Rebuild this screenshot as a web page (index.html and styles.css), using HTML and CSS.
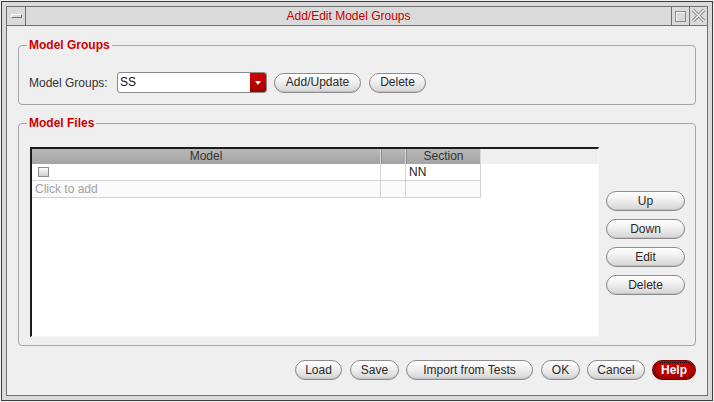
FILE: index.html
```html
<!DOCTYPE html>
<html>
<head>
<meta charset="utf-8">
<link rel="stylesheet" href="styles.css">
</head>
<body>
<div class="window">
  <div class="inner">
    <div class="titlebar">
      <div class="tb-btn tb-menu"><span class="menu-bar"></span></div>
      <div class="title">Add/Edit Model Groups</div>
      <div class="tb-btn tb-right"><span class="max-box"></span></div>
      <div class="tb-btn tb-right">
        <svg width="17" height="18" viewBox="0 0 17 18">
          <path d="M3 3 L14 14 M14 3 L3 14" stroke="#8a8a8a" stroke-width="3.2" fill="none"/>
          <path d="M3 3 L14 14 M14 3 L3 14" stroke="#f6f6f6" stroke-width="1.4" fill="none"/>
        </svg>
      </div>
    </div>
    <div class="content">
      <fieldset class="group group-top">
        <legend>Model Groups</legend>
        <div class="row">
          <span class="label">Model Groups:</span>
          <div class="combo">
            <span class="combo-text">SS</span>
            <span class="combo-arrow"><span class="tri"></span></span>
          </div>
          <button class="btn w-add">Add/Update</button>
          <button class="btn w-del">Delete</button>
        </div>
      </fieldset>
      <fieldset class="group group-files">
        <legend>Model Files</legend>
        <div class="files">
          <div class="table">
            <div class="thead">
              <div class="th">Model</div>
              <div class="th"></div>
              <div class="th">Section</div>
              <div class="th-fill"></div>
            </div>
            <div class="tr">
              <div class="td"><span class="check"></span></div>
              <div class="td"></div>
              <div class="td">NN</div>
            </div>
            <div class="tr tr-alt">
              <div class="td placeholder">Click to add</div>
              <div class="td"></div>
              <div class="td"></div>
            </div>
          </div>
          <div class="side">
            <button class="btn side-btn">Up</button>
            <button class="btn side-btn">Down</button>
            <button class="btn side-btn">Edit</button>
            <button class="btn side-btn">Delete</button>
          </div>
        </div>
      </fieldset>
      <div class="bottom">
        <button class="btn w-load">Load</button>
        <button class="btn w-save">Save</button>
        <button class="btn w-import">Import from Tests</button>
        <button class="btn w-ok">OK</button>
        <button class="btn w-cancel">Cancel</button>
        <button class="btn btn-help">Help</button>
      </div>
    </div>
  </div>
</div>
</body>
</html>
```

FILE: styles.css
```css
* { box-sizing: border-box; }

body {
  margin: 0;
  background: #f0f0f0;
  font: 12px "Liberation Sans", Arial, sans-serif;
  color: #222;
}

.window {
  margin: 1px;
  width: 712px;
  height: 400px;
  border: 1px solid #3c3c3c;
  background: #dadada;
  padding: 4px;
}

.inner {
  height: 100%;
  border: 1px solid #707070;
  background: #efefef;
  display: flex;
  flex-direction: column;
}

.titlebar {
  flex: none;
  height: 19px;
  display: flex;
  background: #dadada;
  border-bottom: 1px solid #707070;
}

.tb-btn {
  flex: none;
  display: flex;
  align-items: center;
  justify-content: center;
}

.tb-menu {
  width: 19px;
  border-right: 1px solid #707070;
}

.menu-bar {
  width: 11px;
  height: 4px;
  border-top: 1px solid #ffffff;
  border-left: 1px solid #ffffff;
  border-right: 1px solid #707070;
  border-bottom: 1px solid #707070;
  background: #dadada;
}

.tb-right {
  width: 18px;
  border-left: 1px solid #707070;
}

.max-box {
  width: 11px;
  height: 11px;
  border: 1px solid #8a8a8a;
  box-shadow: inset 1px 1px 0 #f8f8f8;
}

.title {
  flex: 1;
  text-align: center;
  line-height: 18px;
  color: #c40000;
}

.content {
  flex: 1;
  padding: 12px 11px 0 11px;
}

.group {
  margin: 0;
  border: 1px solid #a6a6a6;
  border-radius: 4px;
  min-width: 0;
}

.group legend {
  padding: 0 2px;
  margin-left: -3px;
  line-height: 14px;
  color: #cc0000;
  font-weight: bold;
}

.group-top {
  padding: 20px 10px 11px 11px;
}

.row {
  display: flex;
  align-items: center;
  height: 21px;
}

.label {
  width: 87px;
  color: #333;
  margin-left: -1px;
}

.combo {
  width: 150px;
  height: 21px;
  display: flex;
  border: 1px solid #8a8a8a;
  border-radius: 3px;
  background: #fff;
  overflow: hidden;
  margin-left: 1px;
  margin-right: 7px;
}

.combo-text {
  flex: 1;
  padding-left: 2px;
  line-height: 19px;
  font-size: 12px;
  color: #111;
}

.combo-arrow {
  width: 16px;
  background: linear-gradient(to bottom, #d40000, #a00000);
  display: flex;
  align-items: center;
  justify-content: center;
}

.tri {
  width: 0;
  height: 0;
  border-left: 3px solid transparent;
  border-right: 3px solid transparent;
  border-top: 4px solid #fff;
}

.btn {
  height: 20px;
  padding: 0;
  border: 1px solid #8c8c8c;
  border-radius: 10px;
  background: linear-gradient(to bottom, #ffffff 0%, #efefef 45%, #d4d4d4 100%);
  box-shadow: inset 0 -1px 0 #c2c2c2;
  font: 12px "Liberation Sans", Arial, sans-serif;
  color: #2a2a2a;
  text-align: center;
  line-height: 17px;
}

.w-add { width: 87px; margin-right: 8px; }
.w-del { width: 57px; }

.group-files {
  margin-top: 11px;
  padding: 17px 9px 8px 11px;
}

.files {
  display: flex;
  gap: 7px;
}

.table {
  flex: none;
  width: 569px;
  height: 190px;
  background: #fff;
  border-top: 2px solid #1c1c1c;
  border-left: 2px solid #1c1c1c;
  border-right: 1px solid #f6f6f6;
  border-bottom: 1px solid #f6f6f6;
}

.thead {
  display: grid;
  grid-template-columns: 349px 25px 75px 1fr;
  height: 15px;
}

.th {
  background: linear-gradient(to bottom, #b8b8b8, #a4a4a4);
  border-right: 1px solid #d8d8d8;
  border-left: 1px solid #8e8e8e;
  text-align: center;
  line-height: 15px;
  color: #333;
}

.th:first-child { border-left: none; }

.th-fill {
  background: #efefef;
}

.tr {
  display: grid;
  grid-template-columns: 349px 25px 75px;
  width: 449px;
  height: 17px;
  background: #fff;
}

.tr-alt { background: #fafafa; }

.td {
  border-right: 1px solid #d2d2d2;
  border-bottom: 1px solid #d2d2d2;
  line-height: 16px;
  padding-left: 3px;
  color: #222;
  display: flex;
  align-items: center;
}

.placeholder { color: #a2a2a2; }

.check {
  width: 11px;
  height: 10px;
  margin-left: 3px;
  border: 1px solid #8c8c8c;
  background: linear-gradient(to bottom, #fafafa, #cfcfcf);
}

.side {
  flex: none;
  width: 79px;
  padding-top: 44px;
  display: flex;
  flex-direction: column;
  gap: 8px;
}

.side-btn { width: 79px; }

.bottom {
  margin-top: 14px;
  display: flex;
  justify-content: flex-end;
}

.w-load { width: 47px; }
.w-save { width: 49px; margin-left: 8px; }
.w-import { width: 127px; margin-left: 7px; }
.w-ok { width: 39px; margin-left: 8px; }
.w-cancel { width: 58px; margin-left: 7px; }

.btn-help {
  width: 44px;
  margin-left: 7px;
  border: 1px solid #6a0000;
  background: linear-gradient(to bottom, #d20000, #a80000);
  box-shadow: none;
  color: #fff;
  font-weight: bold;
  outline: 1px dotted #000;
  outline-offset: -3px;
}
```
